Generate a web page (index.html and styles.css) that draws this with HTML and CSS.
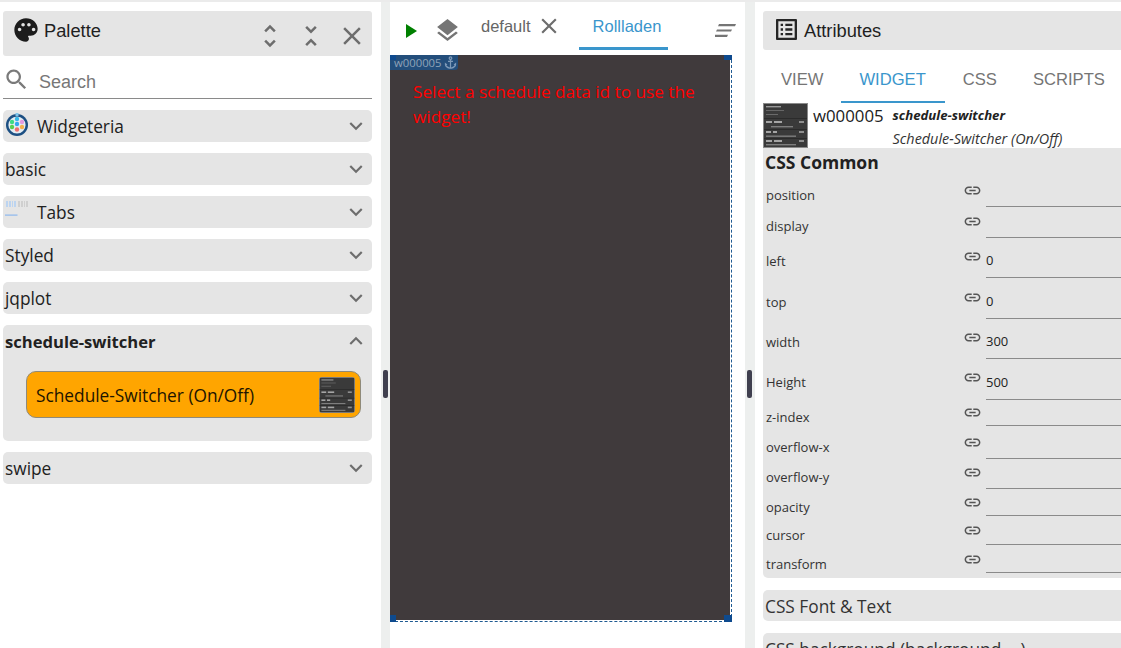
FILE: index.html
```html
<!DOCTYPE html>
<html lang="en">
<head>
<meta charset="utf-8">
<title>Palette</title>
<link rel="stylesheet" href="styles.css">
</head>
<body>
<svg class="defs" width="0" height="0" aria-hidden="true">
  <symbol id="chev-down" viewBox="0 0 24 24"><path d="M16.59 8.59 12 13.17 7.41 8.59 6 10l6 6 6-6z"/></symbol>
  <symbol id="chev-up" viewBox="0 0 24 24"><path d="M12 8l-6 6 1.41 1.41L12 10.83l4.59 4.58L18 14z"/></symbol>
  <symbol id="link" viewBox="0 0 24 24"><path d="M3.9 12c0-1.71 1.39-3.1 3.1-3.1h4V7H7c-2.76 0-5 2.24-5 5s2.24 5 5 5h4v-1.9H7c-1.71 0-3.1-1.39-3.1-3.1zM8 13h8v-2H8v2zm9-6h-4v1.9h4c1.71 0 3.1 1.39 3.1 3.1s-1.39 3.1-3.1 3.1h-4V17h4c2.76 0 5-2.24 5-5s-2.24-5-5-5z"/></symbol>
  <symbol id="close" viewBox="0 0 24 24"><path d="M19 6.41 17.59 5 12 10.59 6.41 5 5 6.41 10.59 12 5 17.59 6.41 19 12 13.41 17.59 19 19 17.59 13.41 12z"/></symbol>
  <symbol id="thumb" viewBox="0 0 45 45">
    <rect width="45" height="45" fill="#8a8a8a"/>
    <rect x="1" y="1" width="43" height="43" fill="#3a3a3a"/>
    <rect x="3" y="3" width="15" height="1.4" fill="#999"/>
    <rect x="3" y="7" width="18" height="1" fill="#666"/>
    <rect x="3" y="11" width="12" height="1" fill="#6a6a6a"/>
    <rect x="1" y="15" width="43" height="1" fill="#2b2b2b"/>
    <rect x="3" y="18" width="6" height="2" fill="#a5a5a5"/><rect x="11" y="18" width="8" height="2" fill="#a5a5a5"/><rect x="36" y="18" width="5" height="2" fill="#8f8f8f"/>
    <rect x="8" y="23" width="22" height="1.4" fill="#7e7e7e"/>
    <rect x="1" y="26" width="43" height="1" fill="#2b2b2b"/>
    <rect x="3" y="28" width="5" height="2" fill="#a5a5a5"/><rect x="10" y="28" width="4" height="2" fill="#a5a5a5"/><rect x="36" y="28" width="5" height="2" fill="#8f8f8f"/>
    <rect x="3" y="32.5" width="30" height="1.4" fill="#7e7e7e"/>
    <rect x="1" y="35" width="43" height="1" fill="#2b2b2b"/>
    <rect x="3" y="37" width="6" height="2" fill="#a5a5a5"/><rect x="11" y="37" width="8" height="2" fill="#a5a5a5"/><rect x="36" y="37" width="5" height="2" fill="#8f8f8f"/>
    <rect x="3" y="41" width="30" height="1.4" fill="#7e7e7e"/>
  </symbol>
</svg>

<div class="app">
  <aside class="palette">
    <header class="panel-head palette-head">
      <svg class="ico-palette" viewBox="0 0 24 24"><path d="M12 2C6.49 2 2 6.49 2 12s4.49 10 10 10c1.38 0 2.5-1.12 2.5-2.5 0-.61-.23-1.2-.64-1.67-.08-.1-.13-.21-.13-.33 0-.28.22-.5.5-.5H16c3.31 0 6-2.69 6-6 0-4.96-4.49-9-10-9zM6.5 13c-.83 0-1.5-.67-1.5-1.5S5.67 10 6.5 10 8 10.67 8 11.5 7.33 13 6.5 13zm3-4C8.67 9 8 8.33 8 7.5S8.67 6 9.5 6s1.5.67 1.5 1.5S10.33 9 9.5 9zm5 0c-.83 0-1.5-.67-1.5-1.5S13.67 6 14.5 6s1.5.67 1.5 1.5S15.33 9 14.5 9zm4 4c-.83 0-1.5-.67-1.5-1.5s.67-1.5 1.5-1.5 1.5.67 1.5 1.5-.67 1.5-1.5 1.5z"/></svg>
      <span class="panel-title">Palette</span>
      <span class="head-actions">
        <svg class="head-btn" viewBox="0 0 24 24"><path d="M12 5.83 15.17 9l1.41-1.41L12 3 7.41 7.59 8.83 9 12 5.83zm0 12.34L8.83 15l-1.41 1.41L12 21l4.59-4.59L15.17 15 12 18.17z"/></svg>
        <svg class="head-btn" viewBox="0 0 24 24"><path d="M7.41 18.59 8.83 20 12 16.83 15.17 20l1.41-1.41L12 14l-4.59 4.59zm9.18-13.18L15.17 4 12 7.17 8.83 4 7.41 5.41 12 10l4.59-4.59z"/></svg>
        <svg class="head-btn" viewBox="0 0 24 24"><use href="#close"/></svg>
      </span>
    </header>

    <div class="search">
      <svg class="ico-search" viewBox="0 0 24 24"><path d="M15.5 14h-.79l-.28-.27C15.41 12.59 16 11.11 16 9.5 16 5.91 13.09 3 9.5 3S3 5.91 3 9.5 5.91 16 9.5 16c1.61 0 3.09-.59 4.23-1.57l.27.28v.79l5 4.99L20.49 19l-4.99-5zm-6 0C7.01 14 5 11.99 5 9.5S7.01 5 9.5 5 14 7.01 14 9.5 11.99 14 9.5 14z"/></svg>
      <span class="search-text">Search</span>
    </div>

    <div class="accordion-list">
      <section class="acc">
        <div class="acc-head">
          <svg class="acc-ico" viewBox="0 0 24 24">
            <circle cx="12" cy="12" r="11" fill="#1c4f83"/>
            <circle cx="12" cy="12" r="8.6" fill="#e4ecf2"/>
            <circle cx="12" cy="6" r="2.2" fill="#39b8e8"/>
            <circle cx="7" cy="9" r="2.2" fill="#3ddc84"/>
            <circle cx="17" cy="9" r="2.2" fill="#e59ae0"/>
            <circle cx="12" cy="11" r="2.2" fill="#35a6f0"/>
            <circle cx="7" cy="14" r="2.2" fill="#59d04e"/>
            <circle cx="17" cy="14" r="2.2" fill="#f4b04e"/>
            <circle cx="12" cy="16.5" r="2.2" fill="#ef6f6c"/>
            <rect x="10.5" y="0" width="3" height="3" fill="#7fc3ea"/>
          </svg>
          <span class="acc-title">Widgeteria</span>
          <svg class="chev"><use href="#chev-down"/></svg>
        </div>
      </section>
      <section class="acc"><div class="acc-head acc-head-plain"><span class="acc-title">basic</span><svg class="chev"><use href="#chev-down"/></svg></div></section>
      <section class="acc">
        <div class="acc-head">
          <svg class="acc-ico" viewBox="0 0 24 24">
            <path d="M1 2h2v6H1zM4 2h2v6H4zM7 2h1v6H7zM9 2h2v6H9z" fill="#bcd4f0"/>
            <path d="M13 2h2v6h-2zM16 2h2v6h-2zM19 2h1v6h-1zM21 2h2v6h-2z" fill="#cfcfcf"/>
            <rect x="0" y="15.500" width="12.500" height="1.200" fill="#8db8ee"/>
          </svg>
          <span class="acc-title">Tabs</span>
          <svg class="chev"><use href="#chev-down"/></svg>
        </div>
      </section>
      <section class="acc"><div class="acc-head acc-head-plain"><span class="acc-title">Styled</span><svg class="chev"><use href="#chev-down"/></svg></div></section>
      <section class="acc"><div class="acc-head acc-head-plain"><span class="acc-title">jqplot</span><svg class="chev"><use href="#chev-down"/></svg></div></section>
      <section class="acc acc-open">
        <div class="acc-head acc-head-plain"><span class="acc-title acc-title-bold">schedule-switcher</span><svg class="chev"><use href="#chev-up"/></svg></div>
        <div class="acc-body">
          <div class="widget-btn">
            <span class="widget-btn-text">Schedule-Switcher (On/Off)</span>
            <svg class="widget-btn-thumb"><use href="#thumb"/></svg>
          </div>
        </div>
      </section>
      <section class="acc"><div class="acc-head acc-head-plain"><span class="acc-title">swipe</span><svg class="chev"><use href="#chev-down"/></svg></div></section>
    </div>
  </aside>

  <div class="gutter"><span class="grip"></span></div>

  <main class="center">
    <nav class="toolbar">
      <svg class="ico-play" viewBox="0 0 11 14"><path d="M0 0v14l11-7z"/></svg>
      <svg class="ico-layers" viewBox="3 2 18 19.1"><path d="m11.99 18.54-7.37-5.73L3 14.07l9 7 9-7-1.63-1.27-7.38 5.74zM12 16l7.36-5.73L21 9l-9-7-9 7 1.63 1.27L12 16z"/></svg>
      <div class="view-tab">
        <span>default</span>
        <svg class="tab-close" viewBox="0 0 24 24"><use href="#close"/></svg>
      </div>
      <div class="view-tab view-tab-active"><span>Rollladen</span></div>
      <svg class="ico-lines" viewBox="0 0 21 13"><path d="M4 0h17l-1 2.2H3zM2 5.4h15l-1 2.2H1zM0 10.8h13l-1 2.2H0z"/></svg>
    </nav>
    <div class="canvas">
      <div class="canvas-fill">
        <p class="warn">Select a schedule data id to use the widget!</p>
      </div>
      <div class="wid-tag">
        <span>w000005</span>
        <svg class="ico-anchor" viewBox="0 0 24 24"><path d="M17 15l1.55 1.55c-.96 1.69-3.33 3.04-5.55 3.37V11h3V9h-3V7.82C14.16 7.4 15 6.3 15 5c0-1.65-1.35-3-3-3S9 3.35 9 5c0 1.3.84 2.4 2 2.82V9H8v2h3v8.92c-2.22-.33-4.59-1.68-5.55-3.37L7 15l-4-3v3c0 3.88 4.92 7 9 7s9-3.12 9-7v-3l-4 3zM12 4c.55 0 1 .45 1 1s-.45 1-1 1-1-.45-1-1 .45-1 1-1z"/></svg>
      </div>
      <i class="handle handle-tl"></i>
      <i class="handle handle-tr"></i>
      <i class="handle handle-bl"></i>
      <i class="handle handle-br"></i>
    </div>
  </main>

  <div class="gutter gutter-right"><span class="grip"></span></div>

  <aside class="attrs">
    <header class="panel-head attrs-head">
      <svg class="ico-list" viewBox="3 3 18 18"><path d="M19 5v14H5V5h14m1.1-2H3.9c-.5 0-.9.4-.9.9v16.2c0 .4.4.9.9.9h16.2c.4 0 .9-.5.9-.9V3.9c0-.5-.5-.9-.9-.9zM11 7h6v2h-6V7zm0 4h6v2h-6v-2zm0 4h6v2h-6zM7 7h2v2H7zm0 4h2v2H7zm0 4h2v2H7z"/></svg>
      <span class="panel-title">Attributes</span>
    </header>
    <div class="attr-tabs">
      <span class="attr-tab">VIEW</span>
      <span class="attr-tab attr-tab-active">WIDGET</span>
      <span class="attr-tab">CSS</span>
      <span class="attr-tab">SCRIPTS</span>
    </div>
    <div class="widget-info">
      <svg class="info-thumb"><use href="#thumb"/></svg>
      <span class="info-id">w000005</span>
      <div class="info-names">
        <b class="info-set">schedule-switcher</b>
        <i class="info-name">Schedule-Switcher (On/Off)</i>
      </div>
    </div>

    <section class="group">
      <h2 class="group-title">CSS Common</h2>
      <div class="props">
        <div class="prop prop-md"><span class="prop-label">position</span><svg class="prop-link"><use href="#link"/></svg><span class="prop-input"></span></div>
        <div class="prop prop-md"><span class="prop-label">display</span><svg class="prop-link"><use href="#link"/></svg><span class="prop-input"></span></div>
        <div class="prop prop-lg"><span class="prop-label">left</span><svg class="prop-link"><use href="#link"/></svg><span class="prop-input">0</span></div>
        <div class="prop prop-lg"><span class="prop-label">top</span><svg class="prop-link"><use href="#link"/></svg><span class="prop-input">0</span></div>
        <div class="prop prop-lg"><span class="prop-label">width</span><svg class="prop-link"><use href="#link"/></svg><span class="prop-input">300</span></div>
        <div class="prop prop-xl"><span class="prop-label">Height</span><svg class="prop-link"><use href="#link"/></svg><span class="prop-input">500</span></div>
        <div class="prop prop-sm"><span class="prop-label">z-index</span><svg class="prop-link"><use href="#link"/></svg><span class="prop-input"></span></div>
        <div class="prop prop-md"><span class="prop-label">overflow-x</span><svg class="prop-link"><use href="#link"/></svg><span class="prop-input"></span></div>
        <div class="prop prop-md"><span class="prop-label">overflow-y</span><svg class="prop-link"><use href="#link"/></svg><span class="prop-input"></span></div>
        <div class="prop prop-sm"><span class="prop-label">opacity</span><svg class="prop-link"><use href="#link"/></svg><span class="prop-input"></span></div>
        <div class="prop prop-xs"><span class="prop-label">cursor</span><svg class="prop-link"><use href="#link"/></svg><span class="prop-input"></span></div>
        <div class="prop prop-sm"><span class="prop-label">transform</span><svg class="prop-link"><use href="#link"/></svg><span class="prop-input"></span></div>
      </div>
    </section>
    <section class="group group-closed"><h2 class="group-plain">CSS Font &amp; Text</h2></section>
    <section class="group group-closed"><h2 class="group-plain">CSS background (background-...)</h2></section>
  </aside>
</div>
</body>
</html>
```

FILE: styles.css
```css
* { box-sizing: border-box; }
html, body { margin: 0; height: 648px; overflow: hidden; background: #fff; }
body { font-family: "Open Sans", "Noto Sans", sans-serif; color: #212121; }
.defs { position: absolute; }

.app {
  display: grid;
  grid-template-columns: 381px 9px 355px 10px 366px;
  height: 648px;
  border-top: 2px solid #ebebeb;
  overflow: hidden;
}

/* panel headers */
.panel-head {
  display: flex;
  background: #e5e5e5;
  border-radius: 3px;
  font-family: "Liberation Sans", Arial, sans-serif;
}
.panel-title { font-size: 18.3px; line-height: 21px; color: #1f1f1f; }

/* left palette */
.palette { padding: 9px 9px 0 3px; }
.palette-head { height: 45px; padding: 8px 0 0 12px; align-items: flex-start; }
.ico-palette { width: 28px; height: 28px; margin-left: -3px; margin-top: -3px; fill: #1c1c1c; flex: none; }
.palette-head .panel-title { margin-left: 4px; margin-top: 1px; }
.head-actions { display: flex; margin-left: auto; gap: 11px; margin-top: 2px; margin-right: 5px; }
.head-btn { width: 30px; height: 30px; fill: #6d6d6d; }
.search {
  display: flex;
  align-items: center;
  height: 43px;
  padding-top: 9px;
  border-bottom: 1px solid #8a8a8a;
}
.ico-search { width: 27px; height: 27px; fill: #7a7a7a; margin-top: -4px; flex: none; }
.search-text {
  margin-left: 9px;
  font: 18px/24px "Liberation Sans", Arial, sans-serif;
  color: #777;
}
.accordion-list { display: flex; flex-direction: column; gap: 11px; margin-top: 11px; }
.acc { background: #e5e5e5; border-radius: 5px; }
.acc-head { display: flex; align-items: center; height: 32px; padding: 0 3px 0 2px; }
.acc-head-plain { padding-left: 2px; }
.acc-ico { width: 24px; height: 24px; margin: -2px 8px 0 0; flex: none; }
.acc-title { font-size: 17.3px; line-height: 32px; padding-top: 2px; }
.acc-title-bold { font-weight: 700; font-size: 16.6px; }
.chev { width: 26px; height: 26px; margin-left: auto; fill: #6d6d6d; flex: none; }
.acc-body { padding: 14px 11px 23px 23px; }
.widget-btn {
  display: flex;
  align-items: center;
  justify-content: space-between;
  height: 47px;
  padding: 0 5px 0 9px;
  background: #ffa500;
  border: 1px solid #8f8a7a;
  border-radius: 10px;
}
.widget-btn-text { font-size: 17.3px; color: #1c1400; padding-top: 1px; }
.widget-btn-thumb { width: 36px; height: 36px; border-radius: 3px; filter: blur(0.3px); }

/* gutters */
.gutter {
  display: flex;
  align-items: center;
  justify-content: center;
  background: #edefee;
  padding-top: 118px;
}
.grip { width: 5px; height: 28px; border-radius: 2px; background: #40404f; }
.gutter-right .grip { transform: translateX(-1px); }

/* center */
.center { min-width: 0; }
.toolbar {
  display: flex;
  align-items: flex-start;
  height: 53px;
}
.ico-play { width: 13px; height: 14px; margin: 22px 0 0 15px; fill: #008000; flex: none; }
.ico-layers { width: 21px; height: 22px; margin: 17px 0 0 19px; fill: #757575; flex: none; }
.view-tab {
  display: flex;
  align-items: flex-start;
  height: 48px;
  padding: 15px 14px 0;
  font: 16.5px/18px "Liberation Sans", Arial, sans-serif;
  color: #666;
  flex: none;
}
.view-tab:nth-of-type(1) { margin-left: 9px; }
.tab-close { width: 26px; height: 26px; margin: -4px 0 0 5px; fill: #6d6d6d; }
.view-tab-active {
  margin-left: 3px;
  color: #3a96cc;
  border-bottom: 3px solid #3a96cc;
  width: 89px;
}
.ico-lines { width: 21px; height: 13px; margin: 22px 0 0 47px; fill: #757575; flex: none; }
.canvas {
  position: relative;
  width: 342px;
  height: 567px;
  padding: 0 1px 1px 0;
  border-right: 1px dashed #1f5a92;
  border-bottom: 1px dashed #1f5a92;
}
.canvas-fill { height: 565px; width: 340px; background: #403a3c; padding: 24px 20px 0 23px; }
.warn { margin: 0; font-size: 17.2px; line-height: 25px; color: #ff0000; }
.wid-tag {
  position: absolute;
  left: 0;
  top: 0;
  display: flex;
  align-items: center;
  gap: 1px;
  width: 68px;
  height: 15px;
  padding-left: 4px;
  background: #234e7b;
  border-radius: 0 0 3px 0;
  font-size: 11.3px;
  line-height: 15px;
  color: #8fa3b8;
}
.ico-anchor { width: 15px; height: 15px; fill: #7e9ab8; flex: none; }
.handle { position: absolute; background: #0e4a8e; }
.handle-tl { left: 0; top: 0; width: 6px; height: 5px; }
.handle-tr { right: -1px; top: 0; width: 8px; height: 5px; }
.handle-bl { left: 0; bottom: -1px; width: 6px; height: 7px; }
.handle-br { right: -1px; bottom: -1px; width: 8px; height: 7px; }

/* right attributes */
.attrs { padding: 9px 0 0 8px; min-width: 0; overflow: hidden; }
.attrs-head { height: 39px; padding: 8px 0 0 13px; border-radius: 3px 0 0 3px; gap: 7px; }
.ico-list { width: 21px; height: 21px; fill: #262626; flex: none; }
.attrs-head .panel-title { margin-top: 1px; }
.attr-tabs {
  display: flex;
  height: 53px;
  font: 16.6px/18px "Liberation Sans", Arial, sans-serif;
  color: #757575;
}
.attr-tab { padding: 21px 18px 0; height: 53px; flex: none; }
.attr-tab-active { color: #3a96cc; border-bottom: 2px solid #3a96cc; padding-right: 19px; }
.widget-info { display: flex; height: 45px; }
.info-thumb { width: 45px; height: 45px; flex: none; filter: blur(0.3px); }
.info-id { margin-left: 5px; font-size: 16.8px; line-height: 25px; flex: none; }
.info-names { margin-left: 9px; padding-top: 1px; display: flex; flex-direction: column; font-size: 13.2px; line-height: 23px; white-space: nowrap; }
.info-set { font-weight: 700; font-style: italic; }
.info-name { color: #333; font-size: 14.4px; }

.group { background: #e5e5e5; border-radius: 0 0 0 5px; }
.group-title { margin: 0; padding-left: 2px; height: 28px; font-size: 17.5px; line-height: 28px; font-weight: 700; }
.props {
  display: grid;
  grid-template-rows: 31px 31px 40px 41px 40px 41px 26px 33px 30px 27px 29px 28px;
  height: 402px;
}
.prop { display: flex; align-items: flex-end; padding-left: 3px; }
.prop-label { width: 197px; font-size: 13px; line-height: 18px; color: #333; flex: none; padding-bottom: var(--offset); }
.prop-link { width: 19px; height: 19px; fill: #555; flex: none; margin-bottom: calc(var(--offset) + 4px); }
.prop-input {
  flex: 1;
  align-self: stretch;
  display: flex;
  align-items: flex-end;
  margin-left: 4px;
  padding-bottom: 8px;
  border-bottom: 1px solid #8a8a8a;
  font-size: 13px;
  line-height: 18px;
  color: #222;
}
.prop-xs { --offset: 1px; }
.prop-sm { --offset: 0px; }
.prop-md { --offset: 3px; }
.prop-lg { --offset: 8px; }
.prop-xl { --offset: 9px; }
.group-closed { margin-top: 12px; border-radius: 5px 0 0 5px; height: 31px; }
.group-plain { margin: 0; padding-left: 2px; font-size: 17.3px; font-weight: 400; line-height: 33px; color: #333; white-space: nowrap; }
```
